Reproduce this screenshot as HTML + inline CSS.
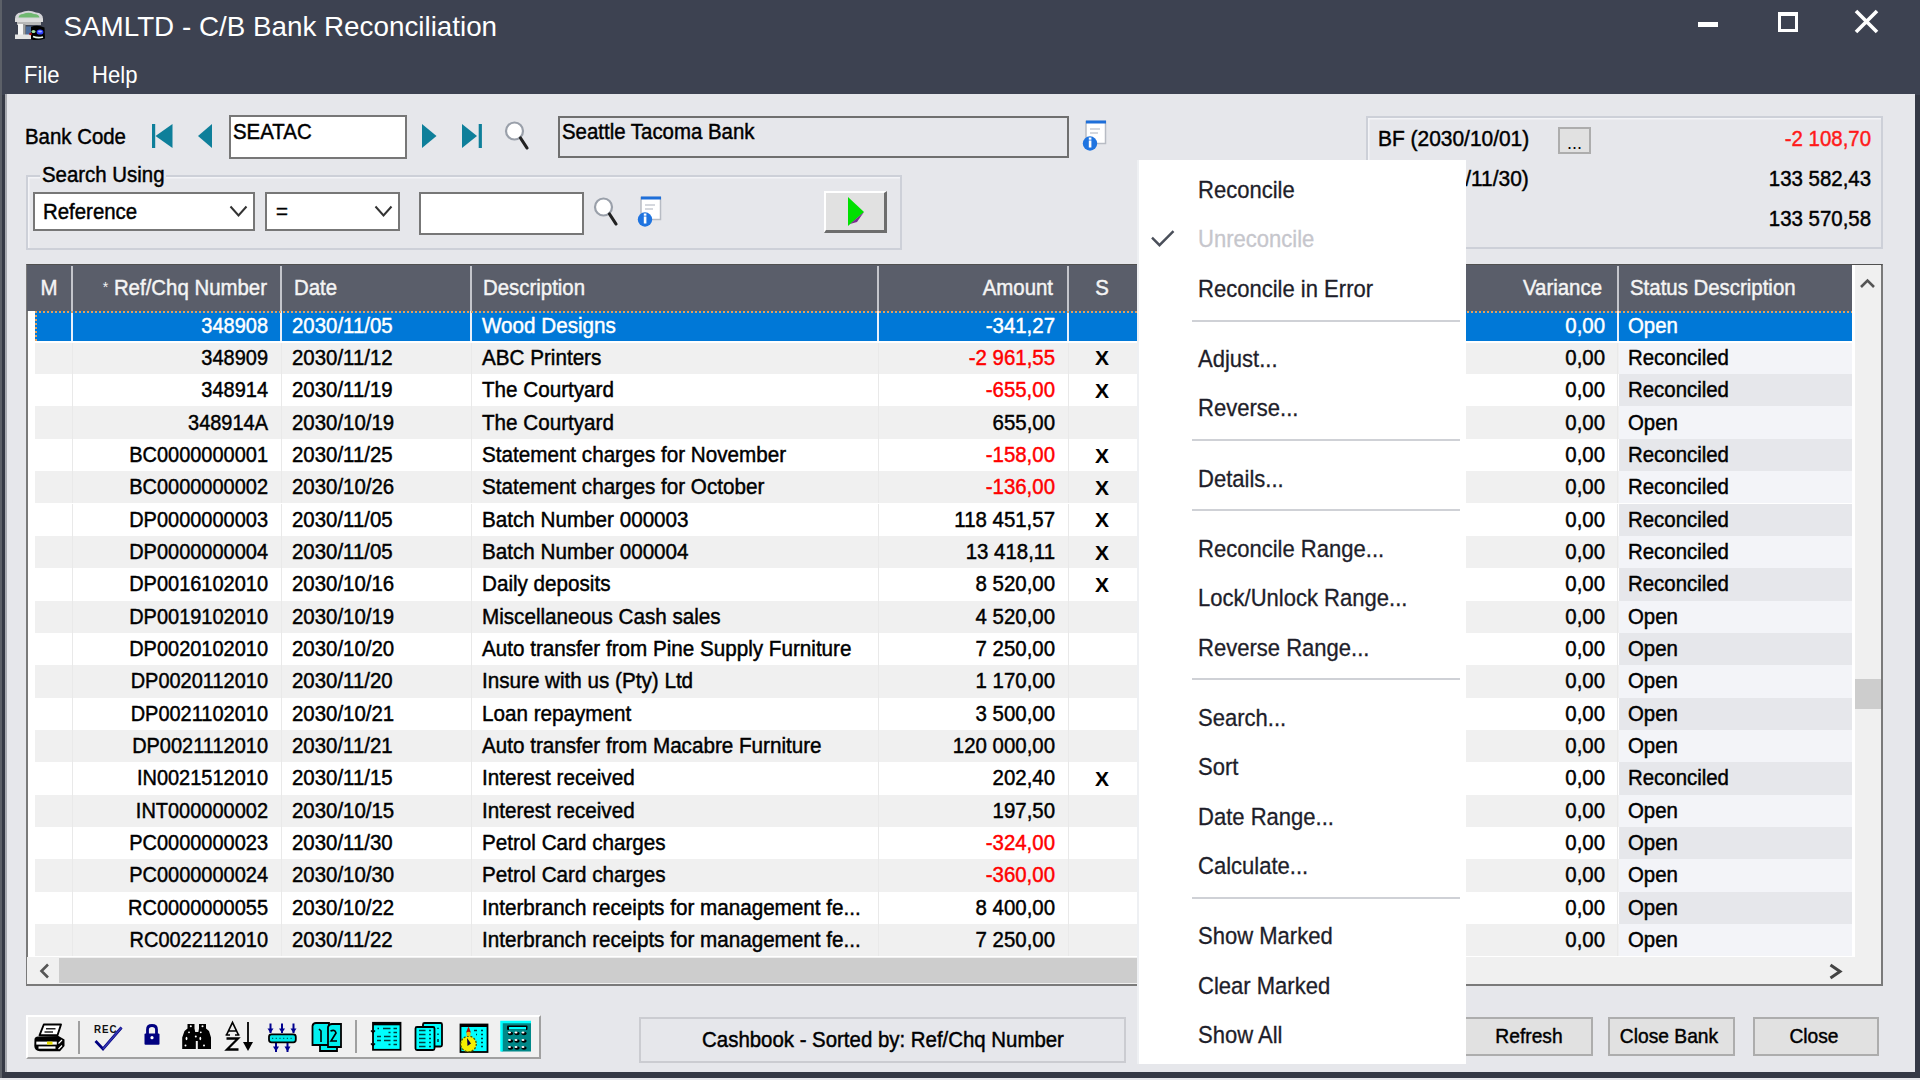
<!DOCTYPE html><html><head><meta charset="utf-8"><style>
html,body{margin:0;padding:0;width:1920px;height:1080px;overflow:hidden;background:#3d4251;}
body{position:relative;font-family:"Liberation Sans",sans-serif;}
.t{position:absolute;white-space:nowrap;line-height:1.15;}
.b{position:absolute;box-sizing:border-box;}
svg{position:absolute;overflow:visible;}
</style></head><body>
<div class="b" style="left:0.00px;top:0.00px;width:1920.00px;height:95.00px;background:#3d4251;"></div>
<div class="t" style="left:63.50px;top:11.02px;font-size:27.8px;color:#ffffff;">SAMLTD - C/B Bank Reconciliation</div>
<div class="t" style="left:23.80px;top:60.52px;font-size:24px;color:#ffffff;transform:scaleX(0.92);transform-origin:left 50%;">File</div>
<div class="t" style="left:92.00px;top:60.52px;font-size:24px;color:#ffffff;transform:scaleX(0.92);transform-origin:left 50%;">Help</div>
<div class="b" style="left:1697.50px;top:21.50px;width:20.50px;height:5.00px;background:#fff;"></div>
<div class="b" style="left:1777.50px;top:12.00px;width:20.00px;height:20.00px;border:3px solid #fff;border-top-width:4px;"></div>
<svg style="left:0;top:0" width="1920" height="60"><path d="M1856 11 L1877 32 M1877 11 L1856 32" stroke="#fff" stroke-width="3.6"/></svg>
<div class="b" style="left:0.00px;top:95.00px;width:1920.00px;height:985.00px;background:#353945;"></div>
<div class="b" style="left:5.00px;top:94.00px;width:1910.00px;height:978.00px;background:#e6e7eb;border-left:2px solid #a8aab0;"></div>
<div class="b" style="left:0.00px;top:0.00px;width:1.50px;height:1080.00px;background:#5c6068;"></div>
<div class="b" style="left:0.00px;top:1078.00px;width:1920.00px;height:2.00px;background:#e6e7eb;"></div>
<div class="t" style="left:25.00px;top:125.13px;font-size:21.6px;color:#000;transform:scaleX(0.945);transform-origin:left 50%;-webkit-text-stroke:0.45px #000;">Bank Code</div>
<svg style="left:0;top:0" width="600" height="200"><rect x="152" y="124" width="3.2" height="24" fill="#0e7f9a"/><path d="M155.5 136 L172.5 124 L172.5 148 Z" fill="#0e7f9a"/><path d="M198 136 L212 124 L212 148 Z" fill="#0e7f9a"/><path d="M436.5 136 L422 124 L422 148 Z" fill="#0e7f9a"/><path d="M477 136 L462 124 L462 148 Z" fill="#0e7f9a"/><rect x="478.7" y="124" width="3.2" height="24" fill="#0e7f9a"/></svg>
<div class="b" style="left:228.60px;top:114.80px;width:178.70px;height:43.80px;background:#fff;border:2px solid #777;"></div>
<div class="t" style="left:233.00px;top:120.13px;font-size:21.6px;color:#000;transform:scaleX(0.945);transform-origin:left 50%;-webkit-text-stroke:0.45px #000;">SEATAC</div>
<div class="b" style="left:557.50px;top:115.50px;width:511.30px;height:42.70px;background:#e6e7eb;border:2px solid #6f6f6f;"></div>
<div class="t" style="left:562.00px;top:120.13px;font-size:21.6px;color:#000;transform:scaleX(0.945);transform-origin:left 50%;-webkit-text-stroke:0.45px #000;">Seattle Tacoma Bank</div>
<div class="b" style="left:26.00px;top:175.00px;width:876.00px;height:74.50px;border:2px solid #cdd0d8;box-shadow:inset 1.5px 1.5px 0 #f3f4f7;"></div>
<div class="b" style="left:40.00px;top:160.00px;width:126.00px;height:30.00px;background:#e6e7eb;"></div>
<div class="t" style="left:42.00px;top:163.13px;font-size:21.6px;color:#000;transform:scaleX(0.945);transform-origin:left 50%;-webkit-text-stroke:0.45px #000;">Search Using</div>
<div class="b" style="left:33.30px;top:191.50px;width:222.00px;height:39.30px;background:#fff;border:2px solid #777;"></div>
<div class="t" style="left:43.30px;top:200.13px;font-size:21.6px;color:#000;transform:scaleX(0.945);transform-origin:left 50%;-webkit-text-stroke:0.45px #000;">Reference</div>
<div class="b" style="left:265.00px;top:191.50px;width:135.00px;height:39.30px;background:#fff;border:2px solid #777;"></div>
<div class="t" style="left:275.50px;top:200.13px;font-size:21.6px;color:#000;transform:scaleX(0.945);transform-origin:left 50%;-webkit-text-stroke:0.45px #000;">=</div>
<div class="b" style="left:419.30px;top:191.50px;width:165.10px;height:43.00px;background:#fff;border:2px solid #777;"></div>
<svg style="left:0;top:0" width="600" height="300"><path d="M230.5 206.5 L238.5 215.5 L246.5 206.5" fill="none" stroke="#333" stroke-width="2"/><path d="M375.5 206.5 L383.5 215.5 L391.5 206.5" fill="none" stroke="#333" stroke-width="2"/></svg>
<div class="b" style="left:823.75px;top:190.60px;width:63.25px;height:42.20px;background:#e1e1e1;border-top:2px solid #fff;border-left:2px solid #fff;border-right:3px solid #6d6d6d;border-bottom:3px solid #6d6d6d;"></div>
<svg style="left:0;top:0" width="1000" height="300"><path d="M848 197 L864 212 L848 226 Z" fill="#00e000"/><path d="M850 224 L864 212 L857 222 Z" fill="#7a2d8f"/></svg>
<svg style="left:504px;top:120px" width="26" height="32"><circle cx="10.5" cy="11" r="8.5" fill="#fff" stroke="#9aa0aa" stroke-width="2.2"/><path d="M16.5 18 L23 28" stroke="#222" stroke-width="3.2" stroke-linecap="round"/></svg>
<svg style="left:593px;top:196px" width="26" height="32"><circle cx="10.5" cy="11" r="8.5" fill="#fff" stroke="#9aa0aa" stroke-width="2.2"/><path d="M16.5 18 L23 28" stroke="#222" stroke-width="3.2" stroke-linecap="round"/></svg>
<svg style="left:1082px;top:119.5px" width="26" height="32"><rect x="4" y="1.5" width="19.5" height="22" fill="#fff" stroke="#b8bcc4" stroke-width="1.5"/><rect x="4" y="0.5" width="20" height="3" fill="#1e6fd9"/><path d="M8 9 H18 M8 13 H16" stroke="#c8ccd4" stroke-width="1.3"/><circle cx="8" cy="23.5" r="7.2" fill="#1f74e0"/><rect x="6.8" y="20.5" width="2.6" height="7" fill="#fff"/><rect x="6.8" y="17.5" width="2.6" height="2.2" fill="#fff"/></svg>
<svg style="left:637px;top:196px" width="26" height="32"><rect x="4" y="1.5" width="19.5" height="22" fill="#fff" stroke="#b8bcc4" stroke-width="1.5"/><rect x="4" y="0.5" width="20" height="3" fill="#1e6fd9"/><path d="M8 9 H18 M8 13 H16" stroke="#c8ccd4" stroke-width="1.3"/><circle cx="8" cy="23.5" r="7.2" fill="#1f74e0"/><rect x="6.8" y="20.5" width="2.6" height="7" fill="#fff"/><rect x="6.8" y="17.5" width="2.6" height="2.2" fill="#fff"/></svg>
<div class="b" style="left:1366.00px;top:116.00px;width:516.50px;height:133.00px;border:2px solid #cdd0d8;box-shadow:inset 1.5px 1.5px 0 #f3f4f7;"></div>
<div class="t" style="left:1377.70px;top:126.83px;font-size:21.6px;color:#000;transform:scaleX(0.969);transform-origin:left 50%;-webkit-text-stroke:0.45px #000;">BF (2030/10/01)</div>
<div class="b" style="left:1557.70px;top:126.80px;width:33.80px;height:27.70px;background:#e1e1e1;border:2px solid #adadad;"></div>
<div class="t" style="left:1554.60px;width:40px;text-align:center;top:133.44px;font-size:18px;color:#000;">...</div>
<div class="t" style="left:1270.60px;width:600px;text-align:right;top:126.83px;font-size:21.6px;color:#ff1a1a;transform:scaleX(0.945);transform-origin:right 50%;-webkit-text-stroke:0.45px #ff1a1a;">-2 108,70</div>
<div class="t" style="left:1377.70px;top:167.13px;font-size:21.6px;color:#000;transform:scaleX(0.969);transform-origin:left 50%;-webkit-text-stroke:0.45px #000;">CF (2030/11/30)</div>
<div class="t" style="left:1270.60px;width:600px;text-align:right;top:167.13px;font-size:21.6px;color:#000;transform:scaleX(0.945);transform-origin:right 50%;-webkit-text-stroke:0.45px #000;">133 582,43</div>
<div class="t" style="left:1270.60px;width:600px;text-align:right;top:207.13px;font-size:21.6px;color:#000;transform:scaleX(0.945);transform-origin:right 50%;-webkit-text-stroke:0.45px #000;">133 570,58</div>
<div class="b" style="left:25.50px;top:263.50px;width:1857.00px;height:722.00px;background:#fff;border:2px solid #7a7a7a;border-top-color:#505050;"></div>
<div class="b" style="left:27.00px;top:264.50px;width:1825.00px;height:46.50px;background:#5a5e6a;"></div>
<div class="b" style="left:71.00px;top:265.50px;width:2.00px;height:45.50px;background:#c4c6cc;"></div>
<div class="b" style="left:280.00px;top:265.50px;width:2.00px;height:45.50px;background:#c4c6cc;"></div>
<div class="b" style="left:470.30px;top:265.50px;width:2.00px;height:45.50px;background:#c4c6cc;"></div>
<div class="b" style="left:877.00px;top:265.50px;width:2.00px;height:45.50px;background:#c4c6cc;"></div>
<div class="b" style="left:1067.00px;top:265.50px;width:2.00px;height:45.50px;background:#c4c6cc;"></div>
<div class="b" style="left:1616.60px;top:265.50px;width:2.00px;height:45.50px;background:#c4c6cc;"></div>
<div class="t" style="left:28.90px;width:40px;text-align:center;top:276.13px;font-size:21.6px;color:#f4f4f4;transform:scaleX(0.945);transform-origin:center 50%;-webkit-text-stroke:0.45px #f4f4f4;">M</div>
<div class="t" style="left:47.00px;width:220px;text-align:right;top:276.13px;font-size:21.6px;color:#f4f4f4;transform:scaleX(0.945);transform-origin:right 50%;-webkit-text-stroke:0.45px #f4f4f4;"><span style="font-size:15px;position:relative;top:-3px;-webkit-text-stroke:0">*</span> Ref/Chq Number</div>
<div class="t" style="left:293.70px;top:276.13px;font-size:21.6px;color:#f4f4f4;transform:scaleX(0.945);transform-origin:left 50%;-webkit-text-stroke:0.45px #f4f4f4;">Date</div>
<div class="t" style="left:483.00px;top:276.13px;font-size:21.6px;color:#f4f4f4;transform:scaleX(0.945);transform-origin:left 50%;-webkit-text-stroke:0.45px #f4f4f4;">Description</div>
<div class="t" style="left:852.50px;width:200px;text-align:right;top:276.13px;font-size:21.6px;color:#f4f4f4;transform:scaleX(0.945);transform-origin:right 50%;-webkit-text-stroke:0.45px #f4f4f4;">Amount</div>
<div class="t" style="left:1081.70px;width:40px;text-align:center;top:276.13px;font-size:21.6px;color:#f4f4f4;transform:scaleX(0.945);transform-origin:center 50%;-webkit-text-stroke:0.45px #f4f4f4;">S</div>
<div class="t" style="left:1402.00px;width:200px;text-align:right;top:276.13px;font-size:21.6px;color:#f4f4f4;transform:scaleX(0.945);transform-origin:right 50%;-webkit-text-stroke:0.45px #f4f4f4;">Variance</div>
<div class="t" style="left:1629.50px;top:276.13px;font-size:21.6px;color:#f4f4f4;transform:scaleX(0.945);transform-origin:left 50%;-webkit-text-stroke:0.45px #f4f4f4;">Status Description</div>
<div class="b" style="left:35.00px;top:311.00px;width:1817.00px;height:30.20px;background:#0078d7;"></div>
<div class="b" style="left:71.00px;top:311.00px;width:2.00px;height:30.20px;background:#e8f0fa;"></div>
<div class="b" style="left:280.00px;top:311.00px;width:2.00px;height:30.20px;background:#e8f0fa;"></div>
<div class="b" style="left:470.30px;top:311.00px;width:2.00px;height:30.20px;background:#e8f0fa;"></div>
<div class="b" style="left:877.00px;top:311.00px;width:2.00px;height:30.20px;background:#e8f0fa;"></div>
<div class="b" style="left:1067.00px;top:311.00px;width:2.00px;height:30.20px;background:#e8f0fa;"></div>
<div class="b" style="left:1616.60px;top:311.00px;width:2.00px;height:30.20px;background:#e8f0fa;"></div>
<div class="b" style="left:35.00px;top:311.00px;width:1817.00px;height:1.60px;background:repeating-linear-gradient(90deg,#e0a060 0 2px,transparent 2px 4px);"></div>
<div class="b" style="left:35.00px;top:311.00px;width:1.60px;height:30.20px;background:repeating-linear-gradient(180deg,#e0a060 0 2px,transparent 2px 4px);"></div>
<div class="t" style="left:68.30px;width:200px;text-align:right;top:313.59px;font-size:21.6px;color:#fff;transform:scaleX(0.925);transform-origin:right 50%;-webkit-text-stroke:0.45px #fff;">348908</div>
<div class="t" style="left:292.30px;top:313.59px;font-size:21.6px;color:#fff;transform:scaleX(0.945);transform-origin:left 50%;-webkit-text-stroke:0.45px #fff;">2030/11/05</div>
<div class="t" style="left:481.70px;top:313.59px;font-size:21.6px;color:#fff;transform:scaleX(0.956);transform-origin:left 50%;-webkit-text-stroke:0.45px #fff;">Wood Designs</div>
<div class="t" style="left:854.50px;width:200px;text-align:right;top:313.59px;font-size:21.6px;color:#fff;transform:scaleX(0.945);transform-origin:right 50%;-webkit-text-stroke:0.45px #fff;">-341,27</div>
<div class="t" style="left:1404.50px;width:200px;text-align:right;top:313.59px;font-size:21.6px;color:#fff;transform:scaleX(0.945);transform-origin:right 50%;-webkit-text-stroke:0.45px #fff;">0,00</div>
<div class="t" style="left:1628.30px;top:313.59px;font-size:21.6px;color:#fff;transform:scaleX(0.945);transform-origin:left 50%;-webkit-text-stroke:0.45px #fff;">Open</div>
<div class="b" style="left:35.00px;top:342.60px;width:1817.00px;height:31.54px;background:#f0f0f0;"></div>
<div class="b" style="left:1618.60px;top:342.60px;width:233.40px;height:31.54px;background:#f3f4f8;"></div>
<div class="b" style="left:71.50px;top:342.60px;width:1.00px;height:31.54px;background:#e9e9e9;"></div>
<div class="b" style="left:280.50px;top:342.60px;width:1.00px;height:31.54px;background:#e9e9e9;"></div>
<div class="b" style="left:470.80px;top:342.60px;width:1.00px;height:31.54px;background:#e9e9e9;"></div>
<div class="b" style="left:877.50px;top:342.60px;width:1.00px;height:31.54px;background:#e9e9e9;"></div>
<div class="b" style="left:1067.50px;top:342.60px;width:1.00px;height:31.54px;background:#e9e9e9;"></div>
<div class="b" style="left:1617.10px;top:342.60px;width:1.00px;height:31.54px;background:#e9e9e9;"></div>
<div class="t" style="left:68.30px;width:200px;text-align:right;top:345.93px;font-size:21.6px;color:#000;transform:scaleX(0.925);transform-origin:right 50%;-webkit-text-stroke:0.45px #000;">348909</div>
<div class="t" style="left:292.30px;top:345.93px;font-size:21.6px;color:#000;transform:scaleX(0.945);transform-origin:left 50%;-webkit-text-stroke:0.45px #000;">2030/11/12</div>
<div class="t" style="left:481.70px;top:345.93px;font-size:21.6px;color:#000;transform:scaleX(0.956);transform-origin:left 50%;-webkit-text-stroke:0.45px #000;">ABC Printers</div>
<div class="t" style="left:854.50px;width:200px;text-align:right;top:345.93px;font-size:21.6px;color:#ff0000;transform:scaleX(0.945);transform-origin:right 50%;-webkit-text-stroke:0.45px #ff0000;">-2 961,55</div>
<div class="t" style="left:1082.00px;width:40px;text-align:center;top:346.48px;font-size:21px;color:#000;font-weight:bold;">X</div>
<div class="t" style="left:1404.50px;width:200px;text-align:right;top:345.93px;font-size:21.6px;color:#000;transform:scaleX(0.945);transform-origin:right 50%;-webkit-text-stroke:0.45px #000;">0,00</div>
<div class="t" style="left:1628.30px;top:345.93px;font-size:21.6px;color:#000;transform:scaleX(0.945);transform-origin:left 50%;-webkit-text-stroke:0.45px #000;">Reconciled</div>
<div class="b" style="left:35.00px;top:374.14px;width:1817.00px;height:32.34px;background:#ffffff;"></div>
<div class="b" style="left:1618.60px;top:374.14px;width:233.40px;height:32.34px;background:#e6e7eb;"></div>
<div class="b" style="left:71.50px;top:374.14px;width:1.00px;height:32.34px;background:#e9e9e9;"></div>
<div class="b" style="left:280.50px;top:374.14px;width:1.00px;height:32.34px;background:#e9e9e9;"></div>
<div class="b" style="left:470.80px;top:374.14px;width:1.00px;height:32.34px;background:#e9e9e9;"></div>
<div class="b" style="left:877.50px;top:374.14px;width:1.00px;height:32.34px;background:#e9e9e9;"></div>
<div class="b" style="left:1067.50px;top:374.14px;width:1.00px;height:32.34px;background:#e9e9e9;"></div>
<div class="b" style="left:1617.10px;top:374.14px;width:1.00px;height:32.34px;background:#e9e9e9;"></div>
<div class="t" style="left:68.30px;width:200px;text-align:right;top:378.27px;font-size:21.6px;color:#000;transform:scaleX(0.925);transform-origin:right 50%;-webkit-text-stroke:0.45px #000;">348914</div>
<div class="t" style="left:292.30px;top:378.27px;font-size:21.6px;color:#000;transform:scaleX(0.945);transform-origin:left 50%;-webkit-text-stroke:0.45px #000;">2030/11/19</div>
<div class="t" style="left:481.70px;top:378.27px;font-size:21.6px;color:#000;transform:scaleX(0.956);transform-origin:left 50%;-webkit-text-stroke:0.45px #000;">The Courtyard</div>
<div class="t" style="left:854.50px;width:200px;text-align:right;top:378.27px;font-size:21.6px;color:#ff0000;transform:scaleX(0.945);transform-origin:right 50%;-webkit-text-stroke:0.45px #ff0000;">-655,00</div>
<div class="t" style="left:1082.00px;width:40px;text-align:center;top:378.82px;font-size:21px;color:#000;font-weight:bold;">X</div>
<div class="t" style="left:1404.50px;width:200px;text-align:right;top:378.27px;font-size:21.6px;color:#000;transform:scaleX(0.945);transform-origin:right 50%;-webkit-text-stroke:0.45px #000;">0,00</div>
<div class="t" style="left:1628.30px;top:378.27px;font-size:21.6px;color:#000;transform:scaleX(0.945);transform-origin:left 50%;-webkit-text-stroke:0.45px #000;">Reconciled</div>
<div class="b" style="left:35.00px;top:406.48px;width:1817.00px;height:32.34px;background:#f0f0f0;"></div>
<div class="b" style="left:1618.60px;top:406.48px;width:233.40px;height:32.34px;background:#f3f4f8;"></div>
<div class="b" style="left:71.50px;top:406.48px;width:1.00px;height:32.34px;background:#e9e9e9;"></div>
<div class="b" style="left:280.50px;top:406.48px;width:1.00px;height:32.34px;background:#e9e9e9;"></div>
<div class="b" style="left:470.80px;top:406.48px;width:1.00px;height:32.34px;background:#e9e9e9;"></div>
<div class="b" style="left:877.50px;top:406.48px;width:1.00px;height:32.34px;background:#e9e9e9;"></div>
<div class="b" style="left:1067.50px;top:406.48px;width:1.00px;height:32.34px;background:#e9e9e9;"></div>
<div class="b" style="left:1617.10px;top:406.48px;width:1.00px;height:32.34px;background:#e9e9e9;"></div>
<div class="t" style="left:68.30px;width:200px;text-align:right;top:410.61px;font-size:21.6px;color:#000;transform:scaleX(0.925);transform-origin:right 50%;-webkit-text-stroke:0.45px #000;">348914A</div>
<div class="t" style="left:292.30px;top:410.61px;font-size:21.6px;color:#000;transform:scaleX(0.945);transform-origin:left 50%;-webkit-text-stroke:0.45px #000;">2030/10/19</div>
<div class="t" style="left:481.70px;top:410.61px;font-size:21.6px;color:#000;transform:scaleX(0.956);transform-origin:left 50%;-webkit-text-stroke:0.45px #000;">The Courtyard</div>
<div class="t" style="left:854.50px;width:200px;text-align:right;top:410.61px;font-size:21.6px;color:#000;transform:scaleX(0.945);transform-origin:right 50%;-webkit-text-stroke:0.45px #000;">655,00</div>
<div class="t" style="left:1404.50px;width:200px;text-align:right;top:410.61px;font-size:21.6px;color:#000;transform:scaleX(0.945);transform-origin:right 50%;-webkit-text-stroke:0.45px #000;">0,00</div>
<div class="t" style="left:1628.30px;top:410.61px;font-size:21.6px;color:#000;transform:scaleX(0.945);transform-origin:left 50%;-webkit-text-stroke:0.45px #000;">Open</div>
<div class="b" style="left:35.00px;top:438.82px;width:1817.00px;height:32.34px;background:#ffffff;"></div>
<div class="b" style="left:1618.60px;top:438.82px;width:233.40px;height:32.34px;background:#e6e7eb;"></div>
<div class="b" style="left:71.50px;top:438.82px;width:1.00px;height:32.34px;background:#e9e9e9;"></div>
<div class="b" style="left:280.50px;top:438.82px;width:1.00px;height:32.34px;background:#e9e9e9;"></div>
<div class="b" style="left:470.80px;top:438.82px;width:1.00px;height:32.34px;background:#e9e9e9;"></div>
<div class="b" style="left:877.50px;top:438.82px;width:1.00px;height:32.34px;background:#e9e9e9;"></div>
<div class="b" style="left:1067.50px;top:438.82px;width:1.00px;height:32.34px;background:#e9e9e9;"></div>
<div class="b" style="left:1617.10px;top:438.82px;width:1.00px;height:32.34px;background:#e9e9e9;"></div>
<div class="t" style="left:68.30px;width:200px;text-align:right;top:442.95px;font-size:21.6px;color:#000;transform:scaleX(0.925);transform-origin:right 50%;-webkit-text-stroke:0.45px #000;">BC0000000001</div>
<div class="t" style="left:292.30px;top:442.95px;font-size:21.6px;color:#000;transform:scaleX(0.945);transform-origin:left 50%;-webkit-text-stroke:0.45px #000;">2030/11/25</div>
<div class="t" style="left:481.70px;top:442.95px;font-size:21.6px;color:#000;transform:scaleX(0.956);transform-origin:left 50%;-webkit-text-stroke:0.45px #000;">Statement charges for November</div>
<div class="t" style="left:854.50px;width:200px;text-align:right;top:442.95px;font-size:21.6px;color:#ff0000;transform:scaleX(0.945);transform-origin:right 50%;-webkit-text-stroke:0.45px #ff0000;">-158,00</div>
<div class="t" style="left:1082.00px;width:40px;text-align:center;top:443.50px;font-size:21px;color:#000;font-weight:bold;">X</div>
<div class="t" style="left:1404.50px;width:200px;text-align:right;top:442.95px;font-size:21.6px;color:#000;transform:scaleX(0.945);transform-origin:right 50%;-webkit-text-stroke:0.45px #000;">0,00</div>
<div class="t" style="left:1628.30px;top:442.95px;font-size:21.6px;color:#000;transform:scaleX(0.945);transform-origin:left 50%;-webkit-text-stroke:0.45px #000;">Reconciled</div>
<div class="b" style="left:35.00px;top:471.16px;width:1817.00px;height:32.34px;background:#f0f0f0;"></div>
<div class="b" style="left:1618.60px;top:471.16px;width:233.40px;height:32.34px;background:#f3f4f8;"></div>
<div class="b" style="left:71.50px;top:471.16px;width:1.00px;height:32.34px;background:#e9e9e9;"></div>
<div class="b" style="left:280.50px;top:471.16px;width:1.00px;height:32.34px;background:#e9e9e9;"></div>
<div class="b" style="left:470.80px;top:471.16px;width:1.00px;height:32.34px;background:#e9e9e9;"></div>
<div class="b" style="left:877.50px;top:471.16px;width:1.00px;height:32.34px;background:#e9e9e9;"></div>
<div class="b" style="left:1067.50px;top:471.16px;width:1.00px;height:32.34px;background:#e9e9e9;"></div>
<div class="b" style="left:1617.10px;top:471.16px;width:1.00px;height:32.34px;background:#e9e9e9;"></div>
<div class="t" style="left:68.30px;width:200px;text-align:right;top:475.29px;font-size:21.6px;color:#000;transform:scaleX(0.925);transform-origin:right 50%;-webkit-text-stroke:0.45px #000;">BC0000000002</div>
<div class="t" style="left:292.30px;top:475.29px;font-size:21.6px;color:#000;transform:scaleX(0.945);transform-origin:left 50%;-webkit-text-stroke:0.45px #000;">2030/10/26</div>
<div class="t" style="left:481.70px;top:475.29px;font-size:21.6px;color:#000;transform:scaleX(0.956);transform-origin:left 50%;-webkit-text-stroke:0.45px #000;">Statement charges for October</div>
<div class="t" style="left:854.50px;width:200px;text-align:right;top:475.29px;font-size:21.6px;color:#ff0000;transform:scaleX(0.945);transform-origin:right 50%;-webkit-text-stroke:0.45px #ff0000;">-136,00</div>
<div class="t" style="left:1082.00px;width:40px;text-align:center;top:475.84px;font-size:21px;color:#000;font-weight:bold;">X</div>
<div class="t" style="left:1404.50px;width:200px;text-align:right;top:475.29px;font-size:21.6px;color:#000;transform:scaleX(0.945);transform-origin:right 50%;-webkit-text-stroke:0.45px #000;">0,00</div>
<div class="t" style="left:1628.30px;top:475.29px;font-size:21.6px;color:#000;transform:scaleX(0.945);transform-origin:left 50%;-webkit-text-stroke:0.45px #000;">Reconciled</div>
<div class="b" style="left:35.00px;top:503.50px;width:1817.00px;height:32.34px;background:#ffffff;"></div>
<div class="b" style="left:1618.60px;top:503.50px;width:233.40px;height:32.34px;background:#e6e7eb;"></div>
<div class="b" style="left:71.50px;top:503.50px;width:1.00px;height:32.34px;background:#e9e9e9;"></div>
<div class="b" style="left:280.50px;top:503.50px;width:1.00px;height:32.34px;background:#e9e9e9;"></div>
<div class="b" style="left:470.80px;top:503.50px;width:1.00px;height:32.34px;background:#e9e9e9;"></div>
<div class="b" style="left:877.50px;top:503.50px;width:1.00px;height:32.34px;background:#e9e9e9;"></div>
<div class="b" style="left:1067.50px;top:503.50px;width:1.00px;height:32.34px;background:#e9e9e9;"></div>
<div class="b" style="left:1617.10px;top:503.50px;width:1.00px;height:32.34px;background:#e9e9e9;"></div>
<div class="t" style="left:68.30px;width:200px;text-align:right;top:507.63px;font-size:21.6px;color:#000;transform:scaleX(0.925);transform-origin:right 50%;-webkit-text-stroke:0.45px #000;">DP0000000003</div>
<div class="t" style="left:292.30px;top:507.63px;font-size:21.6px;color:#000;transform:scaleX(0.945);transform-origin:left 50%;-webkit-text-stroke:0.45px #000;">2030/11/05</div>
<div class="t" style="left:481.70px;top:507.63px;font-size:21.6px;color:#000;transform:scaleX(0.956);transform-origin:left 50%;-webkit-text-stroke:0.45px #000;">Batch Number 000003</div>
<div class="t" style="left:854.50px;width:200px;text-align:right;top:507.63px;font-size:21.6px;color:#000;transform:scaleX(0.945);transform-origin:right 50%;-webkit-text-stroke:0.45px #000;">118 451,57</div>
<div class="t" style="left:1082.00px;width:40px;text-align:center;top:508.18px;font-size:21px;color:#000;font-weight:bold;">X</div>
<div class="t" style="left:1404.50px;width:200px;text-align:right;top:507.63px;font-size:21.6px;color:#000;transform:scaleX(0.945);transform-origin:right 50%;-webkit-text-stroke:0.45px #000;">0,00</div>
<div class="t" style="left:1628.30px;top:507.63px;font-size:21.6px;color:#000;transform:scaleX(0.945);transform-origin:left 50%;-webkit-text-stroke:0.45px #000;">Reconciled</div>
<div class="b" style="left:35.00px;top:535.84px;width:1817.00px;height:32.34px;background:#f0f0f0;"></div>
<div class="b" style="left:1618.60px;top:535.84px;width:233.40px;height:32.34px;background:#f3f4f8;"></div>
<div class="b" style="left:71.50px;top:535.84px;width:1.00px;height:32.34px;background:#e9e9e9;"></div>
<div class="b" style="left:280.50px;top:535.84px;width:1.00px;height:32.34px;background:#e9e9e9;"></div>
<div class="b" style="left:470.80px;top:535.84px;width:1.00px;height:32.34px;background:#e9e9e9;"></div>
<div class="b" style="left:877.50px;top:535.84px;width:1.00px;height:32.34px;background:#e9e9e9;"></div>
<div class="b" style="left:1067.50px;top:535.84px;width:1.00px;height:32.34px;background:#e9e9e9;"></div>
<div class="b" style="left:1617.10px;top:535.84px;width:1.00px;height:32.34px;background:#e9e9e9;"></div>
<div class="t" style="left:68.30px;width:200px;text-align:right;top:539.97px;font-size:21.6px;color:#000;transform:scaleX(0.925);transform-origin:right 50%;-webkit-text-stroke:0.45px #000;">DP0000000004</div>
<div class="t" style="left:292.30px;top:539.97px;font-size:21.6px;color:#000;transform:scaleX(0.945);transform-origin:left 50%;-webkit-text-stroke:0.45px #000;">2030/11/05</div>
<div class="t" style="left:481.70px;top:539.97px;font-size:21.6px;color:#000;transform:scaleX(0.956);transform-origin:left 50%;-webkit-text-stroke:0.45px #000;">Batch Number 000004</div>
<div class="t" style="left:854.50px;width:200px;text-align:right;top:539.97px;font-size:21.6px;color:#000;transform:scaleX(0.945);transform-origin:right 50%;-webkit-text-stroke:0.45px #000;">13 418,11</div>
<div class="t" style="left:1082.00px;width:40px;text-align:center;top:540.52px;font-size:21px;color:#000;font-weight:bold;">X</div>
<div class="t" style="left:1404.50px;width:200px;text-align:right;top:539.97px;font-size:21.6px;color:#000;transform:scaleX(0.945);transform-origin:right 50%;-webkit-text-stroke:0.45px #000;">0,00</div>
<div class="t" style="left:1628.30px;top:539.97px;font-size:21.6px;color:#000;transform:scaleX(0.945);transform-origin:left 50%;-webkit-text-stroke:0.45px #000;">Reconciled</div>
<div class="b" style="left:35.00px;top:568.18px;width:1817.00px;height:32.34px;background:#ffffff;"></div>
<div class="b" style="left:1618.60px;top:568.18px;width:233.40px;height:32.34px;background:#e6e7eb;"></div>
<div class="b" style="left:71.50px;top:568.18px;width:1.00px;height:32.34px;background:#e9e9e9;"></div>
<div class="b" style="left:280.50px;top:568.18px;width:1.00px;height:32.34px;background:#e9e9e9;"></div>
<div class="b" style="left:470.80px;top:568.18px;width:1.00px;height:32.34px;background:#e9e9e9;"></div>
<div class="b" style="left:877.50px;top:568.18px;width:1.00px;height:32.34px;background:#e9e9e9;"></div>
<div class="b" style="left:1067.50px;top:568.18px;width:1.00px;height:32.34px;background:#e9e9e9;"></div>
<div class="b" style="left:1617.10px;top:568.18px;width:1.00px;height:32.34px;background:#e9e9e9;"></div>
<div class="t" style="left:68.30px;width:200px;text-align:right;top:572.31px;font-size:21.6px;color:#000;transform:scaleX(0.925);transform-origin:right 50%;-webkit-text-stroke:0.45px #000;">DP0016102010</div>
<div class="t" style="left:292.30px;top:572.31px;font-size:21.6px;color:#000;transform:scaleX(0.945);transform-origin:left 50%;-webkit-text-stroke:0.45px #000;">2030/10/16</div>
<div class="t" style="left:481.70px;top:572.31px;font-size:21.6px;color:#000;transform:scaleX(0.956);transform-origin:left 50%;-webkit-text-stroke:0.45px #000;">Daily deposits</div>
<div class="t" style="left:854.50px;width:200px;text-align:right;top:572.31px;font-size:21.6px;color:#000;transform:scaleX(0.945);transform-origin:right 50%;-webkit-text-stroke:0.45px #000;">8 520,00</div>
<div class="t" style="left:1082.00px;width:40px;text-align:center;top:572.86px;font-size:21px;color:#000;font-weight:bold;">X</div>
<div class="t" style="left:1404.50px;width:200px;text-align:right;top:572.31px;font-size:21.6px;color:#000;transform:scaleX(0.945);transform-origin:right 50%;-webkit-text-stroke:0.45px #000;">0,00</div>
<div class="t" style="left:1628.30px;top:572.31px;font-size:21.6px;color:#000;transform:scaleX(0.945);transform-origin:left 50%;-webkit-text-stroke:0.45px #000;">Reconciled</div>
<div class="b" style="left:35.00px;top:600.52px;width:1817.00px;height:32.34px;background:#f0f0f0;"></div>
<div class="b" style="left:1618.60px;top:600.52px;width:233.40px;height:32.34px;background:#f3f4f8;"></div>
<div class="b" style="left:71.50px;top:600.52px;width:1.00px;height:32.34px;background:#e9e9e9;"></div>
<div class="b" style="left:280.50px;top:600.52px;width:1.00px;height:32.34px;background:#e9e9e9;"></div>
<div class="b" style="left:470.80px;top:600.52px;width:1.00px;height:32.34px;background:#e9e9e9;"></div>
<div class="b" style="left:877.50px;top:600.52px;width:1.00px;height:32.34px;background:#e9e9e9;"></div>
<div class="b" style="left:1067.50px;top:600.52px;width:1.00px;height:32.34px;background:#e9e9e9;"></div>
<div class="b" style="left:1617.10px;top:600.52px;width:1.00px;height:32.34px;background:#e9e9e9;"></div>
<div class="t" style="left:68.30px;width:200px;text-align:right;top:604.65px;font-size:21.6px;color:#000;transform:scaleX(0.925);transform-origin:right 50%;-webkit-text-stroke:0.45px #000;">DP0019102010</div>
<div class="t" style="left:292.30px;top:604.65px;font-size:21.6px;color:#000;transform:scaleX(0.945);transform-origin:left 50%;-webkit-text-stroke:0.45px #000;">2030/10/19</div>
<div class="t" style="left:481.70px;top:604.65px;font-size:21.6px;color:#000;transform:scaleX(0.956);transform-origin:left 50%;-webkit-text-stroke:0.45px #000;">Miscellaneous Cash sales</div>
<div class="t" style="left:854.50px;width:200px;text-align:right;top:604.65px;font-size:21.6px;color:#000;transform:scaleX(0.945);transform-origin:right 50%;-webkit-text-stroke:0.45px #000;">4 520,00</div>
<div class="t" style="left:1404.50px;width:200px;text-align:right;top:604.65px;font-size:21.6px;color:#000;transform:scaleX(0.945);transform-origin:right 50%;-webkit-text-stroke:0.45px #000;">0,00</div>
<div class="t" style="left:1628.30px;top:604.65px;font-size:21.6px;color:#000;transform:scaleX(0.945);transform-origin:left 50%;-webkit-text-stroke:0.45px #000;">Open</div>
<div class="b" style="left:35.00px;top:632.86px;width:1817.00px;height:32.34px;background:#ffffff;"></div>
<div class="b" style="left:1618.60px;top:632.86px;width:233.40px;height:32.34px;background:#e6e7eb;"></div>
<div class="b" style="left:71.50px;top:632.86px;width:1.00px;height:32.34px;background:#e9e9e9;"></div>
<div class="b" style="left:280.50px;top:632.86px;width:1.00px;height:32.34px;background:#e9e9e9;"></div>
<div class="b" style="left:470.80px;top:632.86px;width:1.00px;height:32.34px;background:#e9e9e9;"></div>
<div class="b" style="left:877.50px;top:632.86px;width:1.00px;height:32.34px;background:#e9e9e9;"></div>
<div class="b" style="left:1067.50px;top:632.86px;width:1.00px;height:32.34px;background:#e9e9e9;"></div>
<div class="b" style="left:1617.10px;top:632.86px;width:1.00px;height:32.34px;background:#e9e9e9;"></div>
<div class="t" style="left:68.30px;width:200px;text-align:right;top:636.99px;font-size:21.6px;color:#000;transform:scaleX(0.925);transform-origin:right 50%;-webkit-text-stroke:0.45px #000;">DP0020102010</div>
<div class="t" style="left:292.30px;top:636.99px;font-size:21.6px;color:#000;transform:scaleX(0.945);transform-origin:left 50%;-webkit-text-stroke:0.45px #000;">2030/10/20</div>
<div class="t" style="left:481.70px;top:636.99px;font-size:21.6px;color:#000;transform:scaleX(0.956);transform-origin:left 50%;-webkit-text-stroke:0.45px #000;">Auto transfer from Pine Supply Furniture</div>
<div class="t" style="left:854.50px;width:200px;text-align:right;top:636.99px;font-size:21.6px;color:#000;transform:scaleX(0.945);transform-origin:right 50%;-webkit-text-stroke:0.45px #000;">7 250,00</div>
<div class="t" style="left:1404.50px;width:200px;text-align:right;top:636.99px;font-size:21.6px;color:#000;transform:scaleX(0.945);transform-origin:right 50%;-webkit-text-stroke:0.45px #000;">0,00</div>
<div class="t" style="left:1628.30px;top:636.99px;font-size:21.6px;color:#000;transform:scaleX(0.945);transform-origin:left 50%;-webkit-text-stroke:0.45px #000;">Open</div>
<div class="b" style="left:35.00px;top:665.20px;width:1817.00px;height:32.34px;background:#f0f0f0;"></div>
<div class="b" style="left:1618.60px;top:665.20px;width:233.40px;height:32.34px;background:#f3f4f8;"></div>
<div class="b" style="left:71.50px;top:665.20px;width:1.00px;height:32.34px;background:#e9e9e9;"></div>
<div class="b" style="left:280.50px;top:665.20px;width:1.00px;height:32.34px;background:#e9e9e9;"></div>
<div class="b" style="left:470.80px;top:665.20px;width:1.00px;height:32.34px;background:#e9e9e9;"></div>
<div class="b" style="left:877.50px;top:665.20px;width:1.00px;height:32.34px;background:#e9e9e9;"></div>
<div class="b" style="left:1067.50px;top:665.20px;width:1.00px;height:32.34px;background:#e9e9e9;"></div>
<div class="b" style="left:1617.10px;top:665.20px;width:1.00px;height:32.34px;background:#e9e9e9;"></div>
<div class="t" style="left:68.30px;width:200px;text-align:right;top:669.33px;font-size:21.6px;color:#000;transform:scaleX(0.925);transform-origin:right 50%;-webkit-text-stroke:0.45px #000;">DP0020112010</div>
<div class="t" style="left:292.30px;top:669.33px;font-size:21.6px;color:#000;transform:scaleX(0.945);transform-origin:left 50%;-webkit-text-stroke:0.45px #000;">2030/11/20</div>
<div class="t" style="left:481.70px;top:669.33px;font-size:21.6px;color:#000;transform:scaleX(0.956);transform-origin:left 50%;-webkit-text-stroke:0.45px #000;">Insure with us (Pty) Ltd</div>
<div class="t" style="left:854.50px;width:200px;text-align:right;top:669.33px;font-size:21.6px;color:#000;transform:scaleX(0.945);transform-origin:right 50%;-webkit-text-stroke:0.45px #000;">1 170,00</div>
<div class="t" style="left:1404.50px;width:200px;text-align:right;top:669.33px;font-size:21.6px;color:#000;transform:scaleX(0.945);transform-origin:right 50%;-webkit-text-stroke:0.45px #000;">0,00</div>
<div class="t" style="left:1628.30px;top:669.33px;font-size:21.6px;color:#000;transform:scaleX(0.945);transform-origin:left 50%;-webkit-text-stroke:0.45px #000;">Open</div>
<div class="b" style="left:35.00px;top:697.54px;width:1817.00px;height:32.34px;background:#ffffff;"></div>
<div class="b" style="left:1618.60px;top:697.54px;width:233.40px;height:32.34px;background:#e6e7eb;"></div>
<div class="b" style="left:71.50px;top:697.54px;width:1.00px;height:32.34px;background:#e9e9e9;"></div>
<div class="b" style="left:280.50px;top:697.54px;width:1.00px;height:32.34px;background:#e9e9e9;"></div>
<div class="b" style="left:470.80px;top:697.54px;width:1.00px;height:32.34px;background:#e9e9e9;"></div>
<div class="b" style="left:877.50px;top:697.54px;width:1.00px;height:32.34px;background:#e9e9e9;"></div>
<div class="b" style="left:1067.50px;top:697.54px;width:1.00px;height:32.34px;background:#e9e9e9;"></div>
<div class="b" style="left:1617.10px;top:697.54px;width:1.00px;height:32.34px;background:#e9e9e9;"></div>
<div class="t" style="left:68.30px;width:200px;text-align:right;top:701.67px;font-size:21.6px;color:#000;transform:scaleX(0.925);transform-origin:right 50%;-webkit-text-stroke:0.45px #000;">DP0021102010</div>
<div class="t" style="left:292.30px;top:701.67px;font-size:21.6px;color:#000;transform:scaleX(0.945);transform-origin:left 50%;-webkit-text-stroke:0.45px #000;">2030/10/21</div>
<div class="t" style="left:481.70px;top:701.67px;font-size:21.6px;color:#000;transform:scaleX(0.956);transform-origin:left 50%;-webkit-text-stroke:0.45px #000;">Loan repayment</div>
<div class="t" style="left:854.50px;width:200px;text-align:right;top:701.67px;font-size:21.6px;color:#000;transform:scaleX(0.945);transform-origin:right 50%;-webkit-text-stroke:0.45px #000;">3 500,00</div>
<div class="t" style="left:1404.50px;width:200px;text-align:right;top:701.67px;font-size:21.6px;color:#000;transform:scaleX(0.945);transform-origin:right 50%;-webkit-text-stroke:0.45px #000;">0,00</div>
<div class="t" style="left:1628.30px;top:701.67px;font-size:21.6px;color:#000;transform:scaleX(0.945);transform-origin:left 50%;-webkit-text-stroke:0.45px #000;">Open</div>
<div class="b" style="left:35.00px;top:729.88px;width:1817.00px;height:32.34px;background:#f0f0f0;"></div>
<div class="b" style="left:1618.60px;top:729.88px;width:233.40px;height:32.34px;background:#f3f4f8;"></div>
<div class="b" style="left:71.50px;top:729.88px;width:1.00px;height:32.34px;background:#e9e9e9;"></div>
<div class="b" style="left:280.50px;top:729.88px;width:1.00px;height:32.34px;background:#e9e9e9;"></div>
<div class="b" style="left:470.80px;top:729.88px;width:1.00px;height:32.34px;background:#e9e9e9;"></div>
<div class="b" style="left:877.50px;top:729.88px;width:1.00px;height:32.34px;background:#e9e9e9;"></div>
<div class="b" style="left:1067.50px;top:729.88px;width:1.00px;height:32.34px;background:#e9e9e9;"></div>
<div class="b" style="left:1617.10px;top:729.88px;width:1.00px;height:32.34px;background:#e9e9e9;"></div>
<div class="t" style="left:68.30px;width:200px;text-align:right;top:734.01px;font-size:21.6px;color:#000;transform:scaleX(0.925);transform-origin:right 50%;-webkit-text-stroke:0.45px #000;">DP0021112010</div>
<div class="t" style="left:292.30px;top:734.01px;font-size:21.6px;color:#000;transform:scaleX(0.945);transform-origin:left 50%;-webkit-text-stroke:0.45px #000;">2030/11/21</div>
<div class="t" style="left:481.70px;top:734.01px;font-size:21.6px;color:#000;transform:scaleX(0.956);transform-origin:left 50%;-webkit-text-stroke:0.45px #000;">Auto transfer from Macabre Furniture</div>
<div class="t" style="left:854.50px;width:200px;text-align:right;top:734.01px;font-size:21.6px;color:#000;transform:scaleX(0.945);transform-origin:right 50%;-webkit-text-stroke:0.45px #000;">120 000,00</div>
<div class="t" style="left:1404.50px;width:200px;text-align:right;top:734.01px;font-size:21.6px;color:#000;transform:scaleX(0.945);transform-origin:right 50%;-webkit-text-stroke:0.45px #000;">0,00</div>
<div class="t" style="left:1628.30px;top:734.01px;font-size:21.6px;color:#000;transform:scaleX(0.945);transform-origin:left 50%;-webkit-text-stroke:0.45px #000;">Open</div>
<div class="b" style="left:35.00px;top:762.22px;width:1817.00px;height:32.34px;background:#ffffff;"></div>
<div class="b" style="left:1618.60px;top:762.22px;width:233.40px;height:32.34px;background:#e6e7eb;"></div>
<div class="b" style="left:71.50px;top:762.22px;width:1.00px;height:32.34px;background:#e9e9e9;"></div>
<div class="b" style="left:280.50px;top:762.22px;width:1.00px;height:32.34px;background:#e9e9e9;"></div>
<div class="b" style="left:470.80px;top:762.22px;width:1.00px;height:32.34px;background:#e9e9e9;"></div>
<div class="b" style="left:877.50px;top:762.22px;width:1.00px;height:32.34px;background:#e9e9e9;"></div>
<div class="b" style="left:1067.50px;top:762.22px;width:1.00px;height:32.34px;background:#e9e9e9;"></div>
<div class="b" style="left:1617.10px;top:762.22px;width:1.00px;height:32.34px;background:#e9e9e9;"></div>
<div class="t" style="left:68.30px;width:200px;text-align:right;top:766.35px;font-size:21.6px;color:#000;transform:scaleX(0.925);transform-origin:right 50%;-webkit-text-stroke:0.45px #000;">IN0021512010</div>
<div class="t" style="left:292.30px;top:766.35px;font-size:21.6px;color:#000;transform:scaleX(0.945);transform-origin:left 50%;-webkit-text-stroke:0.45px #000;">2030/11/15</div>
<div class="t" style="left:481.70px;top:766.35px;font-size:21.6px;color:#000;transform:scaleX(0.956);transform-origin:left 50%;-webkit-text-stroke:0.45px #000;">Interest received</div>
<div class="t" style="left:854.50px;width:200px;text-align:right;top:766.35px;font-size:21.6px;color:#000;transform:scaleX(0.945);transform-origin:right 50%;-webkit-text-stroke:0.45px #000;">202,40</div>
<div class="t" style="left:1082.00px;width:40px;text-align:center;top:766.90px;font-size:21px;color:#000;font-weight:bold;">X</div>
<div class="t" style="left:1404.50px;width:200px;text-align:right;top:766.35px;font-size:21.6px;color:#000;transform:scaleX(0.945);transform-origin:right 50%;-webkit-text-stroke:0.45px #000;">0,00</div>
<div class="t" style="left:1628.30px;top:766.35px;font-size:21.6px;color:#000;transform:scaleX(0.945);transform-origin:left 50%;-webkit-text-stroke:0.45px #000;">Reconciled</div>
<div class="b" style="left:35.00px;top:794.56px;width:1817.00px;height:32.34px;background:#f0f0f0;"></div>
<div class="b" style="left:1618.60px;top:794.56px;width:233.40px;height:32.34px;background:#f3f4f8;"></div>
<div class="b" style="left:71.50px;top:794.56px;width:1.00px;height:32.34px;background:#e9e9e9;"></div>
<div class="b" style="left:280.50px;top:794.56px;width:1.00px;height:32.34px;background:#e9e9e9;"></div>
<div class="b" style="left:470.80px;top:794.56px;width:1.00px;height:32.34px;background:#e9e9e9;"></div>
<div class="b" style="left:877.50px;top:794.56px;width:1.00px;height:32.34px;background:#e9e9e9;"></div>
<div class="b" style="left:1067.50px;top:794.56px;width:1.00px;height:32.34px;background:#e9e9e9;"></div>
<div class="b" style="left:1617.10px;top:794.56px;width:1.00px;height:32.34px;background:#e9e9e9;"></div>
<div class="t" style="left:68.30px;width:200px;text-align:right;top:798.69px;font-size:21.6px;color:#000;transform:scaleX(0.925);transform-origin:right 50%;-webkit-text-stroke:0.45px #000;">INT000000002</div>
<div class="t" style="left:292.30px;top:798.69px;font-size:21.6px;color:#000;transform:scaleX(0.945);transform-origin:left 50%;-webkit-text-stroke:0.45px #000;">2030/10/15</div>
<div class="t" style="left:481.70px;top:798.69px;font-size:21.6px;color:#000;transform:scaleX(0.956);transform-origin:left 50%;-webkit-text-stroke:0.45px #000;">Interest received</div>
<div class="t" style="left:854.50px;width:200px;text-align:right;top:798.69px;font-size:21.6px;color:#000;transform:scaleX(0.945);transform-origin:right 50%;-webkit-text-stroke:0.45px #000;">197,50</div>
<div class="t" style="left:1404.50px;width:200px;text-align:right;top:798.69px;font-size:21.6px;color:#000;transform:scaleX(0.945);transform-origin:right 50%;-webkit-text-stroke:0.45px #000;">0,00</div>
<div class="t" style="left:1628.30px;top:798.69px;font-size:21.6px;color:#000;transform:scaleX(0.945);transform-origin:left 50%;-webkit-text-stroke:0.45px #000;">Open</div>
<div class="b" style="left:35.00px;top:826.90px;width:1817.00px;height:32.34px;background:#ffffff;"></div>
<div class="b" style="left:1618.60px;top:826.90px;width:233.40px;height:32.34px;background:#e6e7eb;"></div>
<div class="b" style="left:71.50px;top:826.90px;width:1.00px;height:32.34px;background:#e9e9e9;"></div>
<div class="b" style="left:280.50px;top:826.90px;width:1.00px;height:32.34px;background:#e9e9e9;"></div>
<div class="b" style="left:470.80px;top:826.90px;width:1.00px;height:32.34px;background:#e9e9e9;"></div>
<div class="b" style="left:877.50px;top:826.90px;width:1.00px;height:32.34px;background:#e9e9e9;"></div>
<div class="b" style="left:1067.50px;top:826.90px;width:1.00px;height:32.34px;background:#e9e9e9;"></div>
<div class="b" style="left:1617.10px;top:826.90px;width:1.00px;height:32.34px;background:#e9e9e9;"></div>
<div class="t" style="left:68.30px;width:200px;text-align:right;top:831.03px;font-size:21.6px;color:#000;transform:scaleX(0.925);transform-origin:right 50%;-webkit-text-stroke:0.45px #000;">PC0000000023</div>
<div class="t" style="left:292.30px;top:831.03px;font-size:21.6px;color:#000;transform:scaleX(0.945);transform-origin:left 50%;-webkit-text-stroke:0.45px #000;">2030/11/30</div>
<div class="t" style="left:481.70px;top:831.03px;font-size:21.6px;color:#000;transform:scaleX(0.956);transform-origin:left 50%;-webkit-text-stroke:0.45px #000;">Petrol Card charges</div>
<div class="t" style="left:854.50px;width:200px;text-align:right;top:831.03px;font-size:21.6px;color:#ff0000;transform:scaleX(0.945);transform-origin:right 50%;-webkit-text-stroke:0.45px #ff0000;">-324,00</div>
<div class="t" style="left:1404.50px;width:200px;text-align:right;top:831.03px;font-size:21.6px;color:#000;transform:scaleX(0.945);transform-origin:right 50%;-webkit-text-stroke:0.45px #000;">0,00</div>
<div class="t" style="left:1628.30px;top:831.03px;font-size:21.6px;color:#000;transform:scaleX(0.945);transform-origin:left 50%;-webkit-text-stroke:0.45px #000;">Open</div>
<div class="b" style="left:35.00px;top:859.24px;width:1817.00px;height:32.34px;background:#f0f0f0;"></div>
<div class="b" style="left:1618.60px;top:859.24px;width:233.40px;height:32.34px;background:#f3f4f8;"></div>
<div class="b" style="left:71.50px;top:859.24px;width:1.00px;height:32.34px;background:#e9e9e9;"></div>
<div class="b" style="left:280.50px;top:859.24px;width:1.00px;height:32.34px;background:#e9e9e9;"></div>
<div class="b" style="left:470.80px;top:859.24px;width:1.00px;height:32.34px;background:#e9e9e9;"></div>
<div class="b" style="left:877.50px;top:859.24px;width:1.00px;height:32.34px;background:#e9e9e9;"></div>
<div class="b" style="left:1067.50px;top:859.24px;width:1.00px;height:32.34px;background:#e9e9e9;"></div>
<div class="b" style="left:1617.10px;top:859.24px;width:1.00px;height:32.34px;background:#e9e9e9;"></div>
<div class="t" style="left:68.30px;width:200px;text-align:right;top:863.37px;font-size:21.6px;color:#000;transform:scaleX(0.925);transform-origin:right 50%;-webkit-text-stroke:0.45px #000;">PC0000000024</div>
<div class="t" style="left:292.30px;top:863.37px;font-size:21.6px;color:#000;transform:scaleX(0.945);transform-origin:left 50%;-webkit-text-stroke:0.45px #000;">2030/10/30</div>
<div class="t" style="left:481.70px;top:863.37px;font-size:21.6px;color:#000;transform:scaleX(0.956);transform-origin:left 50%;-webkit-text-stroke:0.45px #000;">Petrol Card charges</div>
<div class="t" style="left:854.50px;width:200px;text-align:right;top:863.37px;font-size:21.6px;color:#ff0000;transform:scaleX(0.945);transform-origin:right 50%;-webkit-text-stroke:0.45px #ff0000;">-360,00</div>
<div class="t" style="left:1404.50px;width:200px;text-align:right;top:863.37px;font-size:21.6px;color:#000;transform:scaleX(0.945);transform-origin:right 50%;-webkit-text-stroke:0.45px #000;">0,00</div>
<div class="t" style="left:1628.30px;top:863.37px;font-size:21.6px;color:#000;transform:scaleX(0.945);transform-origin:left 50%;-webkit-text-stroke:0.45px #000;">Open</div>
<div class="b" style="left:35.00px;top:891.58px;width:1817.00px;height:32.34px;background:#ffffff;"></div>
<div class="b" style="left:1618.60px;top:891.58px;width:233.40px;height:32.34px;background:#e6e7eb;"></div>
<div class="b" style="left:71.50px;top:891.58px;width:1.00px;height:32.34px;background:#e9e9e9;"></div>
<div class="b" style="left:280.50px;top:891.58px;width:1.00px;height:32.34px;background:#e9e9e9;"></div>
<div class="b" style="left:470.80px;top:891.58px;width:1.00px;height:32.34px;background:#e9e9e9;"></div>
<div class="b" style="left:877.50px;top:891.58px;width:1.00px;height:32.34px;background:#e9e9e9;"></div>
<div class="b" style="left:1067.50px;top:891.58px;width:1.00px;height:32.34px;background:#e9e9e9;"></div>
<div class="b" style="left:1617.10px;top:891.58px;width:1.00px;height:32.34px;background:#e9e9e9;"></div>
<div class="t" style="left:68.30px;width:200px;text-align:right;top:895.71px;font-size:21.6px;color:#000;transform:scaleX(0.925);transform-origin:right 50%;-webkit-text-stroke:0.45px #000;">RC0000000055</div>
<div class="t" style="left:292.30px;top:895.71px;font-size:21.6px;color:#000;transform:scaleX(0.945);transform-origin:left 50%;-webkit-text-stroke:0.45px #000;">2030/10/22</div>
<div class="t" style="left:481.70px;top:895.71px;font-size:21.6px;color:#000;transform:scaleX(0.956);transform-origin:left 50%;-webkit-text-stroke:0.45px #000;">Interbranch receipts for management fe...</div>
<div class="t" style="left:854.50px;width:200px;text-align:right;top:895.71px;font-size:21.6px;color:#000;transform:scaleX(0.945);transform-origin:right 50%;-webkit-text-stroke:0.45px #000;">8 400,00</div>
<div class="t" style="left:1404.50px;width:200px;text-align:right;top:895.71px;font-size:21.6px;color:#000;transform:scaleX(0.945);transform-origin:right 50%;-webkit-text-stroke:0.45px #000;">0,00</div>
<div class="t" style="left:1628.30px;top:895.71px;font-size:21.6px;color:#000;transform:scaleX(0.945);transform-origin:left 50%;-webkit-text-stroke:0.45px #000;">Open</div>
<div class="b" style="left:35.00px;top:923.92px;width:1817.00px;height:32.34px;background:#f0f0f0;"></div>
<div class="b" style="left:1618.60px;top:923.92px;width:233.40px;height:32.34px;background:#f3f4f8;"></div>
<div class="b" style="left:71.50px;top:923.92px;width:1.00px;height:32.34px;background:#e9e9e9;"></div>
<div class="b" style="left:280.50px;top:923.92px;width:1.00px;height:32.34px;background:#e9e9e9;"></div>
<div class="b" style="left:470.80px;top:923.92px;width:1.00px;height:32.34px;background:#e9e9e9;"></div>
<div class="b" style="left:877.50px;top:923.92px;width:1.00px;height:32.34px;background:#e9e9e9;"></div>
<div class="b" style="left:1067.50px;top:923.92px;width:1.00px;height:32.34px;background:#e9e9e9;"></div>
<div class="b" style="left:1617.10px;top:923.92px;width:1.00px;height:32.34px;background:#e9e9e9;"></div>
<div class="t" style="left:68.30px;width:200px;text-align:right;top:928.05px;font-size:21.6px;color:#000;transform:scaleX(0.925);transform-origin:right 50%;-webkit-text-stroke:0.45px #000;">RC0022112010</div>
<div class="t" style="left:292.30px;top:928.05px;font-size:21.6px;color:#000;transform:scaleX(0.945);transform-origin:left 50%;-webkit-text-stroke:0.45px #000;">2030/11/22</div>
<div class="t" style="left:481.70px;top:928.05px;font-size:21.6px;color:#000;transform:scaleX(0.956);transform-origin:left 50%;-webkit-text-stroke:0.45px #000;">Interbranch receipts for management fe...</div>
<div class="t" style="left:854.50px;width:200px;text-align:right;top:928.05px;font-size:21.6px;color:#000;transform:scaleX(0.945);transform-origin:right 50%;-webkit-text-stroke:0.45px #000;">7 250,00</div>
<div class="t" style="left:1404.50px;width:200px;text-align:right;top:928.05px;font-size:21.6px;color:#000;transform:scaleX(0.945);transform-origin:right 50%;-webkit-text-stroke:0.45px #000;">0,00</div>
<div class="t" style="left:1628.30px;top:928.05px;font-size:21.6px;color:#000;transform:scaleX(0.945);transform-origin:left 50%;-webkit-text-stroke:0.45px #000;">Open</div>
<div class="b" style="left:1852.00px;top:264.50px;width:3.00px;height:692.50px;background:#fff;"></div>
<div class="b" style="left:1855.00px;top:264.50px;width:25.50px;height:692.50px;background:#f0f0f0;"></div>
<svg style="left:0;top:0" width="1920" height="1080"><path d="M1861 287 L1867.5 280.5 L1874 287" fill="none" stroke="#555" stroke-width="2.6"/></svg>
<div class="b" style="left:1855.00px;top:679.00px;width:25.50px;height:30.00px;background:#cdcdcd;"></div>
<div class="b" style="left:27.00px;top:957.00px;width:1853.50px;height:26.50px;background:#f0f0f0;"></div>
<div class="b" style="left:58.50px;top:958.00px;width:1241.50px;height:25.00px;background:#cdcdcd;"></div>
<svg style="left:0;top:0" width="1920" height="1080"><path d="M48 964.5 L41.5 971 L48 977.5" fill="none" stroke="#555" stroke-width="2.6"/><path d="M1830.5 965 L1840 971.5 L1830.5 978" fill="none" stroke="#444" stroke-width="3"/></svg>
<div class="b" style="left:26.00px;top:1014.70px;width:514.50px;height:44.30px;background:#f0f0f0;border-top:2px solid #fff;border-left:2px solid #fff;border-right:2px solid #a0a0a0;border-bottom:2px solid #a0a0a0;"></div>
<div class="b" style="left:78.20px;top:1020.60px;width:2.00px;height:33.10px;background:#a0a0a0;"></div>
<div class="b" style="left:355.30px;top:1019.80px;width:2.00px;height:33.60px;background:#a0a0a0;"></div>
<div class="b" style="left:639.00px;top:1017.00px;width:487.30px;height:46.30px;border:2px solid #cbccd1;"></div>
<div class="t" style="left:642.60px;width:480px;text-align:center;top:1027.83px;font-size:21.6px;color:#000;transform:scaleX(0.945);transform-origin:center 50%;-webkit-text-stroke:0.45px #000;">Cashbook - Sorted by: Ref/Chq Number</div>
<div class="b" style="left:1440.00px;top:1017.00px;width:152.50px;height:38.50px;background:#e1e1e1;border:2px solid #adadad;"></div>
<div class="t" style="left:1428.50px;width:200px;text-align:center;top:1024.43px;font-size:21px;color:#000;transform:scaleX(0.915);transform-origin:center 50%;-webkit-text-stroke:0.45px #000;">Refresh</div>
<div class="b" style="left:1608.00px;top:1017.00px;width:127.00px;height:38.50px;background:#e1e1e1;border:2px solid #adadad;"></div>
<div class="t" style="left:1569.40px;width:200px;text-align:center;top:1024.43px;font-size:21px;color:#000;transform:scaleX(0.915);transform-origin:center 50%;-webkit-text-stroke:0.45px #000;">Close Bank</div>
<div class="b" style="left:1752.50px;top:1017.00px;width:126.50px;height:38.50px;background:#e1e1e1;border:2px solid #adadad;"></div>
<div class="t" style="left:1714.00px;width:200px;text-align:center;top:1024.43px;font-size:21px;color:#000;transform:scaleX(0.915);transform-origin:center 50%;-webkit-text-stroke:0.45px #000;">Close</div>
<svg style="left:0;top:0" width="1920" height="1080">
<!-- title icon: bank -->
<g>
<path d="M15 19 Q15 13 21 12.5 Q28.5 9 36 12.5 Q43 13 43 19 Z" fill="#d4d4d8"/>
<path d="M18.5 17.5 Q19 14 23 14 Q28.5 11.5 34 14 Q39 14 39.5 17.5 Z" fill="#70b870"/>
<rect x="15" y="18.5" width="28" height="3.5" fill="#dcdcdc"/>
<rect x="17" y="22" width="24" height="3" fill="#b8b8b8"/>
<rect x="18" y="24" width="5" height="11" fill="#f6f6f6"/>
<rect x="23" y="24" width="2.5" height="11" fill="#a0a0a0"/>
<rect x="26" y="26.5" width="5" height="8.5" fill="#4a6a9a"/>
<rect x="15" y="34.5" width="16" height="4.5" fill="#e4e4e4"/>
<path d="M31 27 Q37 24.5 44.5 27.5 L45 38.5 Q38 41 31 39.5 Z" fill="#000"/>
<ellipse cx="40" cy="32" rx="3.4" ry="2.6" fill="#3040ff"/>
<ellipse cx="40" cy="31.5" rx="2" ry="1" fill="#a0b0ff"/>
<ellipse cx="33.5" cy="31.5" rx="2" ry="1.5" fill="#a8e8a8"/>
<path d="M33 36.5 Q38 38.5 43 37" stroke="#e8f8e8" stroke-width="1.6" fill="none"/>
<circle cx="30.5" cy="34" r="1.3" fill="#b01010"/>
</g>
<!-- printer -->
<path d="M34.5 1039 Q35 1036.5 38 1036.5 L58.5 1036 L64.5 1039.5 L64.5 1046 L60 1051.3 L40 1051.3 Q34.5 1051 34.3 1046 Z" fill="#000"/>
<path d="M43.8 1024.5 L61 1024.5 L57.5 1035.3 L39.5 1035.3 Z" fill="#fff" stroke="#000" stroke-width="1.9" stroke-linejoin="round"/>
<path d="M46 1028.8 H55.5 M44.5 1032 H53" stroke="#222" stroke-width="1.5"/>
<rect x="36.3" y="1041.6" width="20.5" height="3" fill="#fff"/>
<rect x="47" y="1041.6" width="5.5" height="3" fill="#e8e000"/>
<rect x="38.5" y="1046.4" width="17" height="2.3" fill="#fff"/>
<path d="M58.5 1043.5 L62 1040 M58.5 1049 L62 1045.5" stroke="#fff" stroke-width="1.2"/>
<!-- REC check -->
<text x="94" y="1033.5" font-family="Liberation Sans" font-weight="bold" font-size="11.5" fill="#111" letter-spacing="1.2" transform="translate(94 1033.5) scale(0.85 1) translate(-94 -1033.5)">REC</text>
<path d="M95.5 1041 L103 1049 L121.5 1027.5" fill="none" stroke="#000080" stroke-width="2.8"/>
<path d="M103 1049 L121.5 1027.5" fill="none" stroke="#3535b0" stroke-width="1.6"/>
<!-- lock -->
<path d="M147.5 1034 V1029.5 Q147.5 1025.5 152 1025.5 Q156.5 1025.5 156.5 1029.5 V1034" fill="none" stroke="#000080" stroke-width="2.8"/>
<rect x="144.5" y="1033.5" width="15" height="11.3" rx="1" fill="#000080"/>
<circle cx="152" cy="1037.7" r="1.6" fill="#fff"/>
<!-- binoculars -->
<g fill="#000">
<path d="M187.5 1024 H194.5 V1028.5 L195.8 1035 V1049 H182.2 V1037.5 L184.5 1031 L187.5 1028.5 Z"/>
<path d="M199 1024 H206 V1028.5 L209 1031 L211 1037.5 V1049 H197.8 V1035 L199 1028.5 Z"/>
<rect x="194.5" y="1032" width="4.5" height="9"/>
</g>
<g fill="#fff"><circle cx="190.8" cy="1026.3" r="1"/><circle cx="202.5" cy="1026.3" r="1"/><circle cx="189" cy="1032.3" r="0.9"/><circle cx="200.8" cy="1032.3" r="0.9"/><ellipse cx="186.5" cy="1038.5" rx="0.9" ry="1.8"/><ellipse cx="200.3" cy="1038.5" rx="0.9" ry="1.8"/><circle cx="195.8" cy="1036.5" r="1"/><circle cx="185.5" cy="1045.5" r="1"/><circle cx="204" cy="1045.5" r="1"/></g>
<!-- A Z sort -->
<path d="M226.5 1035 L232.5 1022.5 L238.5 1035 M228.5 1031 H236.5 M225.5 1035 H230 M235 1035 H239.5" fill="none" stroke="#000" stroke-width="1.7"/>
<path d="M226.5 1038.5 H238 L227 1049.5 H238.5" fill="none" stroke="#000" stroke-width="2.3"/>
<path d="M248 1022 V1044" stroke="#000" stroke-width="1.8"/>
<path d="M243 1042 L253 1042 L248 1051 Z" fill="#000"/>
<!-- compress -->
<g fill="none" stroke="#000090" stroke-width="2">
<path d="M270.5 1023.5 V1033 M282 1023.5 V1033 M293.5 1023.5 V1033"/>
<path d="M276 1043 V1052 M287.5 1043 V1052"/>
</g>
<g fill="#000090">
<path d="M267.5 1028.5 L273.5 1028.5 L270.5 1033 Z"/><path d="M279 1028.5 L285 1028.5 L282 1033 Z"/><path d="M290.5 1028.5 L296.5 1028.5 L293.5 1033 Z"/>
<path d="M273 1046.5 L279 1046.5 L276 1051.5 Z"/><path d="M284.5 1046.5 L290.5 1046.5 L287.5 1051.5 Z"/>
</g>
<rect x="269" y="1034.3" width="26.8" height="8" rx="2.5" fill="#00e8e8" stroke="#000" stroke-width="1.8"/>
<path d="M272 1038.3 H293" stroke="#006060" stroke-width="1.3" stroke-dasharray="1.2 2.5"/>
<!-- pages 1 2 -->
<g stroke="#000" stroke-width="1.8" fill="#00f0f0">
<path d="M320 1041 H337 V1051 H320 Z"/>
<path d="M312.5 1026 Q313 1023 316 1023 L329 1023 L329 1045 L312.5 1045 Z"/>
<path d="M328 1027 Q329 1024 332 1024 L341 1024 L341 1047 L328 1047 Z"/>
</g>
<path d="M319 1029 L321 1031 L321 1042 M330.5 1031 Q335 1029 336 1033 L331 1041 H337" fill="none" stroke="#000" stroke-width="1.6"/>
<!-- list1 -->
<rect x="373" y="1022.8" width="27.5" height="27" fill="#00ffff" stroke="#000" stroke-width="1.8"/>
<rect x="373" y="1022.3" width="27.5" height="3" fill="#000"/>
<g stroke="#004040" stroke-width="1.6">
<path d="M377.5 1028.5 H379 M383 1028.5 H390.5 M393.5 1028.5 H397"/>
<path d="M388.5 1032.5 H390.5 M393.5 1032.5 H397"/>
<path d="M377 1036.5 H381 M384 1036.5 H390.5 M393.5 1036.5 H397"/>
<path d="M377 1040.5 H381 M384 1040.5 H390.5 M393.5 1040.5 H397"/>
<path d="M388.5 1044.5 H390.5 M393.5 1044.5 H397"/>
</g>
<path d="M371 1030.5 L373 1032.5 L375 1030.5 M371 1043.5 L373 1045.5 L375 1043.5" stroke="#000" stroke-width="1.5" fill="none"/>
<!-- list2 -->
<rect x="423" y="1023" width="19" height="23.5" rx="1.5" fill="#00ffff" stroke="#000" stroke-width="1.8"/>
<rect x="415.5" y="1027" width="19" height="23" rx="1.5" fill="#00ffff" stroke="#000" stroke-width="1.8"/>
<g stroke="#004040" stroke-width="1.6">
<path d="M419 1030.5 H425.5 M429 1030.5 H431 M419 1034.5 H425.5 M429 1034.5 H431 M419 1038.5 H425.5 M429 1038.5 H431 M419 1042.5 H425.5 M429 1042.5 H431 M419 1046.5 H425.5 M429 1046.5 H431"/>
<path d="M438 1027.8 V1029 M438 1033.5 V1035 M438 1039 V1042"/>
</g>
<!-- timer list -->
<rect x="460.5" y="1024.5" width="27" height="27.5" fill="#00ffff" stroke="#000" stroke-width="1.8"/>
<rect x="460.5" y="1024" width="27" height="3" fill="#000"/>
<g stroke="#004040" stroke-width="1.6"><path d="M474 1030.5 H477 M481 1030.5 H483 M476 1034.5 H477 M481 1034.5 H483 M481 1038.5 H483 M481 1042.5 H483 M481 1046.5 H483"/></g>
<circle cx="468.5" cy="1044" r="7.8" fill="#f4f000" stroke="#555500" stroke-width="1.3" stroke-dasharray="2 1.5"/>
<path d="M467 1038 L471 1043.5 L467.5 1046" fill="#000040"/>
<path d="M468.5 1026.5 L466 1032.5 L471 1032.5 Z" fill="#c01000"/>
<circle cx="468.5" cy="1034" r="2.2" fill="#f0c000"/>
<!-- calculator -->
<rect x="501.5" y="1022" width="29.5" height="29.5" fill="#008888"/>
<path d="M501.5 1051.5 V1022 H531" fill="none" stroke="#00ffff" stroke-width="2.5"/>
<rect x="507" y="1025.5" width="20.5" height="4.5" rx="1" fill="#000"/>
<rect x="509" y="1027" width="17" height="2.5" fill="#00ffff"/>
<g fill="#000">
<ellipse cx="510.5" cy="1033.5" rx="2.7" ry="1.8"/><ellipse cx="517" cy="1033.5" rx="2.7" ry="1.8"/><ellipse cx="524" cy="1033.5" rx="2.7" ry="1.8"/>
<ellipse cx="510.5" cy="1041" rx="2.7" ry="1.8"/><ellipse cx="517" cy="1041" rx="2.7" ry="1.8"/><ellipse cx="524" cy="1041" rx="2.7" ry="1.8"/>
<ellipse cx="510.5" cy="1048" rx="2.7" ry="1.8"/><ellipse cx="517" cy="1048" rx="2.7" ry="1.8"/><ellipse cx="524" cy="1048" rx="2.7" ry="1.8"/>
</g>
<g fill="#fff">
<ellipse cx="509.5" cy="1032.5" rx="1.5" ry="0.9"/><ellipse cx="516" cy="1032.5" rx="1.5" ry="0.9"/><ellipse cx="523" cy="1032.5" rx="1.5" ry="0.9"/>
<ellipse cx="509.5" cy="1040" rx="1.5" ry="0.9"/><ellipse cx="516" cy="1040" rx="1.5" ry="0.9"/><ellipse cx="523" cy="1040" rx="1.5" ry="0.9"/>
<ellipse cx="509.5" cy="1047" rx="1.5" ry="0.9"/><ellipse cx="516" cy="1047" rx="1.5" ry="0.9"/><ellipse cx="523" cy="1047" rx="1.5" ry="0.9"/>
</g>
</svg>
<div class="b" style="left:1136.50px;top:160.00px;width:329.00px;height:904.00px;background:#ffffff;border-left:2px solid #eef0f3;"></div>
<div class="t" style="left:1198.20px;top:177.00px;font-size:23.7px;color:#1e1e2a;transform:scaleX(0.93);transform-origin:left 50%;-webkit-text-stroke:0.3px #1e1e2a;">Reconcile</div>
<div class="t" style="left:1198.20px;top:226.40px;font-size:23.7px;color:#c6c6cc;transform:scaleX(0.93);transform-origin:left 50%;-webkit-text-stroke:0.3px #c6c6cc;">Unreconcile</div>
<svg style="left:0;top:0" width="1920" height="1080"><path d="M1152 237.7 L1159.5 245.2 L1173.5 231.2" fill="none" stroke="#4a4f5a" stroke-width="2.4"/></svg>
<div class="t" style="left:1198.20px;top:275.80px;font-size:23.7px;color:#1e1e2a;transform:scaleX(0.93);transform-origin:left 50%;-webkit-text-stroke:0.3px #1e1e2a;">Reconcile in Error</div>
<div class="b" style="left:1192.00px;top:319.50px;width:268.00px;height:2.00px;background:#cfd1d6;"></div>
<div class="t" style="left:1198.20px;top:346.00px;font-size:23.7px;color:#1e1e2a;transform:scaleX(0.93);transform-origin:left 50%;-webkit-text-stroke:0.3px #1e1e2a;">Adjust...</div>
<div class="t" style="left:1198.20px;top:395.40px;font-size:23.7px;color:#1e1e2a;transform:scaleX(0.93);transform-origin:left 50%;-webkit-text-stroke:0.3px #1e1e2a;">Reverse...</div>
<div class="b" style="left:1192.00px;top:439.10px;width:268.00px;height:2.00px;background:#cfd1d6;"></div>
<div class="t" style="left:1198.20px;top:465.60px;font-size:23.7px;color:#1e1e2a;transform:scaleX(0.93);transform-origin:left 50%;-webkit-text-stroke:0.3px #1e1e2a;">Details...</div>
<div class="b" style="left:1192.00px;top:509.30px;width:268.00px;height:2.00px;background:#cfd1d6;"></div>
<div class="t" style="left:1198.20px;top:535.80px;font-size:23.7px;color:#1e1e2a;transform:scaleX(0.93);transform-origin:left 50%;-webkit-text-stroke:0.3px #1e1e2a;">Reconcile Range...</div>
<div class="t" style="left:1198.20px;top:585.20px;font-size:23.7px;color:#1e1e2a;transform:scaleX(0.93);transform-origin:left 50%;-webkit-text-stroke:0.3px #1e1e2a;">Lock/Unlock Range...</div>
<div class="t" style="left:1198.20px;top:634.60px;font-size:23.7px;color:#1e1e2a;transform:scaleX(0.93);transform-origin:left 50%;-webkit-text-stroke:0.3px #1e1e2a;">Reverse Range...</div>
<div class="b" style="left:1192.00px;top:678.30px;width:268.00px;height:2.00px;background:#cfd1d6;"></div>
<div class="t" style="left:1198.20px;top:704.80px;font-size:23.7px;color:#1e1e2a;transform:scaleX(0.93);transform-origin:left 50%;-webkit-text-stroke:0.3px #1e1e2a;">Search...</div>
<div class="t" style="left:1198.20px;top:754.20px;font-size:23.7px;color:#1e1e2a;transform:scaleX(0.93);transform-origin:left 50%;-webkit-text-stroke:0.3px #1e1e2a;">Sort</div>
<div class="t" style="left:1198.20px;top:803.60px;font-size:23.7px;color:#1e1e2a;transform:scaleX(0.93);transform-origin:left 50%;-webkit-text-stroke:0.3px #1e1e2a;">Date Range...</div>
<div class="t" style="left:1198.20px;top:853.00px;font-size:23.7px;color:#1e1e2a;transform:scaleX(0.93);transform-origin:left 50%;-webkit-text-stroke:0.3px #1e1e2a;">Calculate...</div>
<div class="b" style="left:1192.00px;top:896.70px;width:268.00px;height:2.00px;background:#cfd1d6;"></div>
<div class="t" style="left:1198.20px;top:923.20px;font-size:23.7px;color:#1e1e2a;transform:scaleX(0.93);transform-origin:left 50%;-webkit-text-stroke:0.3px #1e1e2a;">Show Marked</div>
<div class="t" style="left:1198.20px;top:972.60px;font-size:23.7px;color:#1e1e2a;transform:scaleX(0.93);transform-origin:left 50%;-webkit-text-stroke:0.3px #1e1e2a;">Clear Marked</div>
<div class="t" style="left:1198.20px;top:1022.00px;font-size:23.7px;color:#1e1e2a;transform:scaleX(0.93);transform-origin:left 50%;-webkit-text-stroke:0.3px #1e1e2a;">Show All</div>
</body></html>
